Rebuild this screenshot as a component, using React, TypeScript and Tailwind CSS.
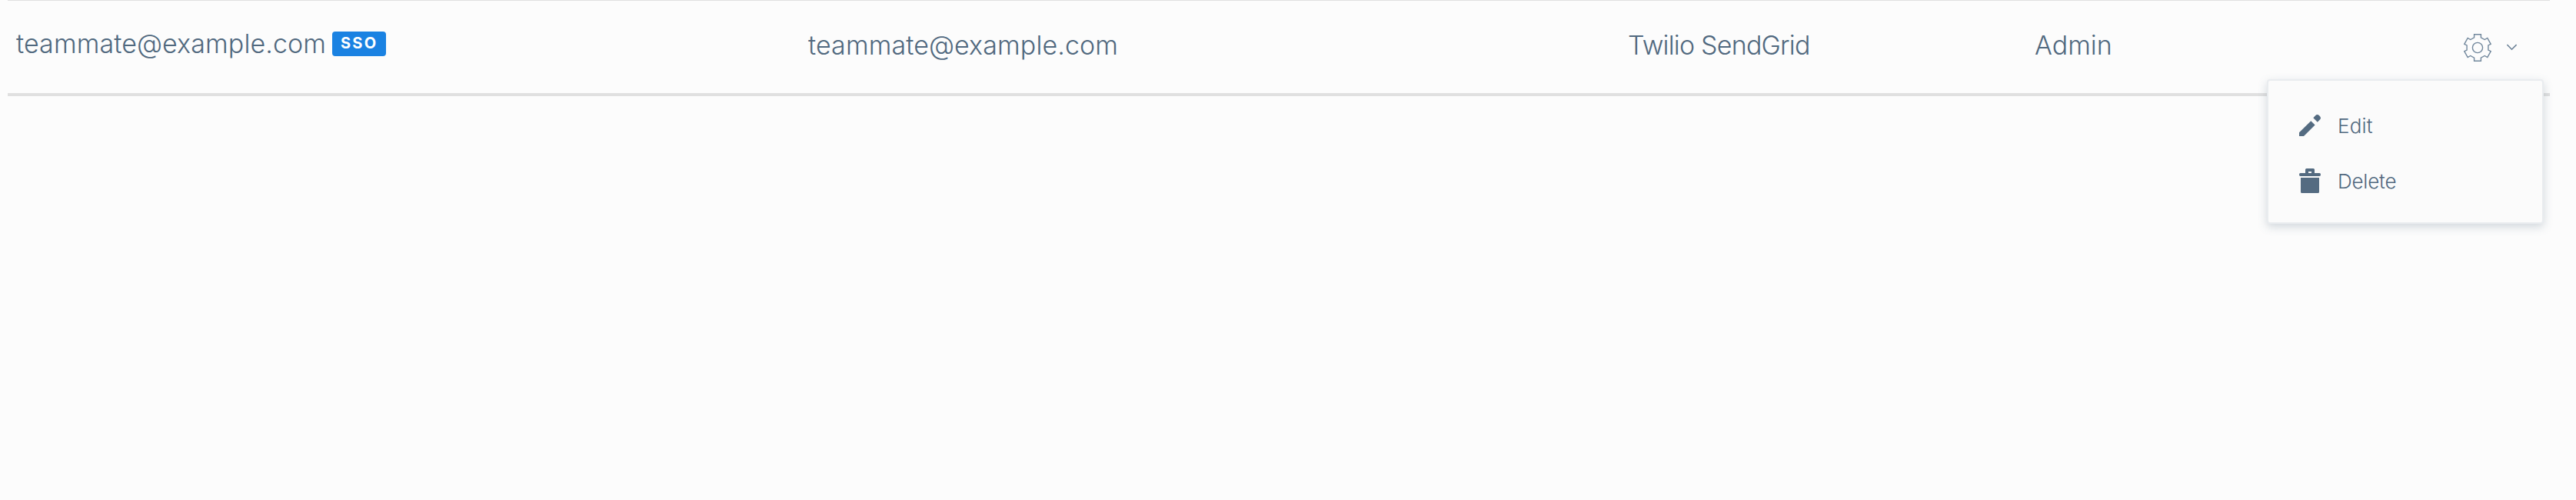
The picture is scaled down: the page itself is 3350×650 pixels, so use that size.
function GearIcon() {
  return (
    <svg width="36" height="36" viewBox="0 0 36 36" fill="none" stroke="#71879c" strokeWidth="1.4">
      <path d="M13.6 .8H22.4V4.9L27.2 7.5 30.8 5.5 35.2 13.3 31.9 15V21L35.2 22.7 30.8 30.5 27.2 28.5 22.4 31.1V35.2H13.6V31.1L8.8 28.5 5.2 30.5 .8 22.7 4.1 21V15L.8 13.3 5.2 5.5 8.8 7.5 13.6 4.9Z" />
      <circle cx="18" cy="18" r="6.6" />
    </svg>
  );
}

function ChevronIcon() {
  return (
    <svg width="14" height="9" viewBox="0 0 14 9" fill="none" stroke="#6b8196" strokeWidth="1.5">
      <path d="M.4 1.1 6.5 7.2 12.6 1.1" />
    </svg>
  );
}

function PencilIcon() {
  return (
    <svg width="28" height="28" viewBox="0 0 28 28" fill="#546b81">
      <path d="M0 28V23.2L15.3 8.2 20.6 13.4 6 28ZM18.3 4.2 21.1 1.2Q23.4-1.1 25.9 1.1L27.2 2.5Q28.8 4.6 27 6.6L23.8 9.7Z" />
    </svg>
  );
}

function TrashIcon() {
  return (
    <svg width="28" height="32" viewBox="0 0 28 32" fill="#546b81">
      <path d="M9.6 0H18.4Q20 0 20 1.6V6H26.5Q28 6 28 8T26.5 10H1.5Q0 10 0 8T1.5 6H8V1.6Q8 0 9.6 0ZM12 4V6H16V4ZM2 12H26V30.5Q26 32 24.5 32H3.5Q2 32 2 30.5Z" fillRule="evenodd" />
    </svg>
  );
}

export default function App() {
  return (
    <div className="min-h-[650px] bg-[#fcfcfc] px-[10px] pr-[34px] font-['Inter',sans-serif] font-light text-[#50687e]">
      <div className="grid h-[125px] grid-cols-[1030px_1066px_529px_1fr] items-start border-t border-b-4 border-t-[#e0e0e0] border-b-[#e0e0e0] pl-[11px] text-[34px] leading-[40px]">
        <div className="flex items-start pt-[36px]">
          <span className="tracking-[0.1px]">teammate@example.com</span>
          <span className="mt-[4px] ml-[8px] h-[32px] w-[70px] rounded-[4px] bg-[#1a82e2] pl-[11px] text-[20px] leading-[30px] font-bold tracking-[2.2px] text-white">
            SSO
          </span>
        </div>
        <div className="pt-[38px] tracking-[0.1px]">teammate@example.com</div>
        <div className="pt-[38px] tracking-[-0.8px]">Twilio SendGrid</div>
        <div className="relative flex items-start justify-between">
          <span className="pt-[38px]">Admin</span>
          <button className="flex items-start pt-[43px] pr-[42px]" aria-label="Teammate actions">
            <GearIcon />
            <span className="mt-[13px] ml-[20px]">
              <ChevronIcon />
            </span>
          </button>
          <ul className="absolute top-[102px] right-[8px] flex h-[188px] w-[360px] flex-col rounded-[4px] border-2 border-[#e9ecef] bg-[#fbfbfb] pt-[40px] pl-[40px] text-[26px] leading-[36px] shadow-[0_4px_12px_rgba(84,107,129,0.25)]">
            <li className="flex h-[72px] items-start">
              <span className="mt-[4px] w-[50px]">
                <PencilIcon />
              </span>
              <span className="pt-[1px] tracking-[0.2px]">Edit</span>
            </li>
            <li className="flex items-start">
              <span className="mt-[2px] w-[50px]">
                <TrashIcon />
              </span>
              <span className="pt-[1px] tracking-[-0.2px]">Delete</span>
            </li>
          </ul>
        </div>
      </div>
    </div>
  );
}
